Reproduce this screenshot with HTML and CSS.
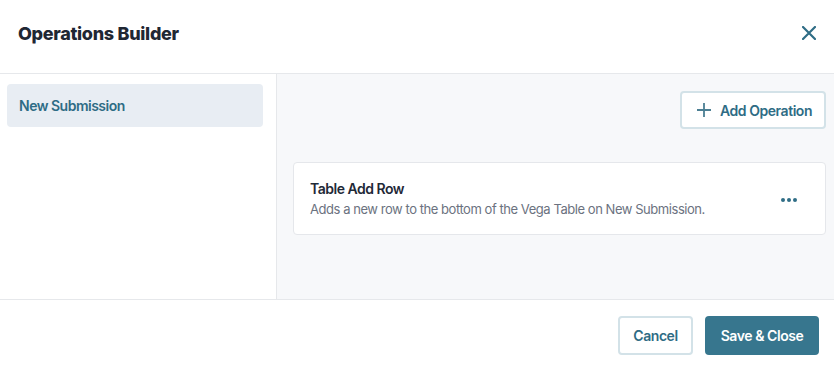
FILE: index.html
```html
<!DOCTYPE html>
<html>
<head>
<meta charset="utf-8">
<link rel="stylesheet" href="styles.css">
</head>
<body>
<div class="modal">
  <header class="header">
    <h1 class="title">Operations Builder</h1>
    <button class="close" aria-label="Close">
      <svg width="14" height="14" viewBox="0 0 14 14"><path d="M1 1L13 13M13 1L1 13" stroke="#2f6d86" stroke-width="2.2" stroke-linecap="round"/></svg>
    </button>
  </header>
  <main class="body">
    <aside class="sidebar">
      <div class="side-item">New Submission</div>
    </aside>
    <section class="content">
      <div class="toolbar">
        <button class="btn btn-outline add">
          <svg width="14" height="14" viewBox="0 0 14 14"><path d="M7 0V14M0 7H14" stroke="#4c7f93" stroke-width="1.8"/></svg>
          <span>Add Operation</span>
        </button>
      </div>
      <div class="card">
        <div class="card-text">
          <div class="card-title">Table Add Row</div>
          <div class="card-desc">Adds a new row to the bottom of the Vega Table on New Submission.</div>
        </div>
        <div class="dots"><span></span><span></span><span></span></div>
      </div>
    </section>
  </main>
  <footer class="footer">
    <button class="btn btn-outline cancel">Cancel</button>
    <button class="btn btn-primary save">Save &amp; Close</button>
  </footer>
</div>
</body>
</html>
```
FILE: styles.css
```css
* { box-sizing: border-box; }
html, body { margin: 0; padding: 0; }
body {
  font-family: "Inter", "Noto Sans", sans-serif;
  background: #fff;
  width: 834px;
  height: 366px;
  overflow: hidden;
}
.modal { display: flex; flex-direction: column; height: 366px; }
.header {
  height: 74px;
  border-bottom: 1px solid #e6e8eb;
  display: flex;
  align-items: center;
  justify-content: space-between;
  padding: 0 18px 7px 18px;
}
.title {
  margin: 0;
  font-family: "Inter", sans-serif;
  font-weight: 800;
  font-size: 18px;
  letter-spacing: -0.3px;
  color: #1f2733;
}
.close {
  border: 0; background: none; padding: 0;
  width: 14px; height: 14px;
  display: flex;
}
.body {
  height: 226px;
  display: flex;
  border-bottom: 1px solid #e6e8eb;
}
.sidebar {
  width: 277px;
  border-right: 1px solid #e6e8eb;
  padding: 10px 13px 0 7px;
}
.side-item {
  height: 43px;
  background: #e8edf3;
  border-radius: 4px;
  padding: 0 12px;
  display: flex;
  align-items: center;
  font-weight: 600;
  font-size: 14px;
  letter-spacing: -0.5px;
  color: #2e6c85;
}
.content {
  flex: 1;
  background: #f7f8fa;
  padding: 17px 8px 0 16px;
}
.toolbar { display: flex; justify-content: flex-end; }
.btn {
  font-family: "Inter", sans-serif;
  font-weight: 600;
  font-size: 14px;
  letter-spacing: -0.45px;
  border-radius: 4px;
  cursor: pointer;
}
.btn-outline {
  background: #fff;
  border: 2px solid #d3e2e8;
  color: #2e6c85;
}
.add {
  height: 38px;
  width: 146px;
  display: flex;
  align-items: center;
  gap: 9px;
  padding: 0 0 0 15px;
}
.card {
  margin-top: 33px;
  height: 73px;
  background: #fff;
  border: 1px solid #e5e7eb;
  border-radius: 4px;
  display: flex;
  align-items: center;
  justify-content: space-between;
  padding: 0 28px 0 16px;
}
.card-title {
  font-weight: 600;
  font-size: 14px;
  letter-spacing: -0.5px;
  color: #1f2937;
  line-height: 18px;
}
.card-desc {
  font-size: 13px;
  letter-spacing: -0.45px;
  color: #6b7280;
  line-height: 18px;
  margin-top: 2px;
}
.dots { display: flex; gap: 2px; margin-top: 2px; }
.dots span {
  width: 4px; height: 4px; border-radius: 50%;
  background: #2f6d86;
}
.footer {
  flex: 1;
  display: flex;
  justify-content: flex-end;
  align-items: flex-start;
  gap: 12px;
  padding: 16px 15px 0 0;
}
.cancel { height: 39px; width: 75px; }
.btn-primary {
  background: #37768e;
  border: 0;
  color: #fff;
}
.save { height: 39px; width: 114px; }
```
